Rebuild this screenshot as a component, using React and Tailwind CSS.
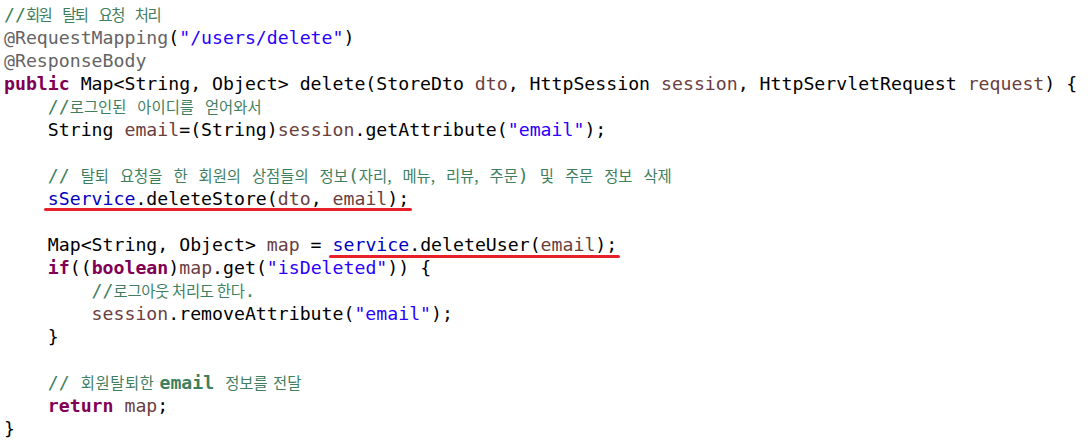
const KW = "text-[#7f0055] font-bold";
const STR = "text-[#2a00ff]";
const CM = "text-[#3f7f5f]";
const ANN = "text-[#646464]";
const LV = "text-[#6a3e3e]";
const FLD = "text-[#0000c0]";

function K({ children, className = "" }) {
  return (
    <span className={`font-['Noto_Sans_CJK_KR','Noto_Sans_CJK_SC',sans-serif] text-[15.4px] font-normal ${className}`}>
      {children}
    </span>
  );
}

function Line({ indent = 0, children }) {
  return (
    <div className="h-[23px] leading-[23px] whitespace-pre">
      {"    ".repeat(indent)}
      {children}
    </div>
  );
}

function Mark({ children, top }) {
  return (
    <span className="relative">
      {children}
      <span className={`absolute left-[-4px] right-[-3px] ${top} h-[3px] rounded-full bg-[#e8202a]`} />
    </span>
  );
}

export default function App() {
  return (
    <div className="min-h-screen w-[1090px] h-[445px] bg-white overflow-hidden">
      <div className="pl-[4px] pt-[3px] text-black font-['DejaVu_Sans_Mono','Liberation_Mono',monospace] text-[18.2px]">
        <Line>
          <span className={CM}>
            //<K className="tracking-[-1.5px]">회원</K> <K className="tracking-[-1.5px]">탈퇴</K> <K className="tracking-[-1.5px]">요청</K> <K className="tracking-[-1.5px]">처리</K>
          </span>
        </Line>
        <Line>
          <span className={ANN}>@RequestMapping</span>(<span className={STR}>"/users/delete"</span>)
        </Line>
        <Line>
          <span className={ANN}>@ResponseBody</span>
        </Line>
        <Line>
          <span className={KW}>public</span> Map&lt;String, Object&gt; delete(StoreDto <span className={LV}>dto</span>, HttpSession{" "}
          <span className={LV}>session</span>, HttpServletRequest <span className={LV}>request</span>) {"{"}
        </Line>
        <Line indent={1}>
          <span className={CM}>
            //<K>로그인된</K> <K>아이디를</K> <K>얻어와서</K>
          </span>
        </Line>
        <Line indent={1}>
          String <span className={LV}>email</span>=(String)<span className={LV}>session</span>.getAttribute(
          <span className={STR}>"email"</span>);
        </Line>
        <Line />
        <Line indent={1}>
          <span className={CM}>
            // <K>탈퇴</K> <K>요청을</K> <K>한</K> <K>회원의</K> <K>상점들의</K> <K>정보</K>(<K>자리,</K> <K>메뉴,</K> <K>리뷰,</K>{" "}
            <K>주문</K>) <K>및</K> <K>주문</K> <K>정보</K> <K>삭제</K>
          </span>
        </Line>
        <Line indent={1}>
          <Mark top="top-[20px]">
            <span className={FLD}>sService</span>.deleteStore(<span className={LV}>dto</span>, <span className={LV}>email</span>);
          </Mark>
        </Line>
        <Line />
        <Line indent={1}>
          Map&lt;String, Object&gt; <span className={LV}>map</span> ={" "}
          <Mark top="top-[21px]">
            <span className={FLD}>service</span>.deleteUser(<span className={LV}>email</span>);
          </Mark>
        </Line>
        <Line indent={1}>
          <span className={KW}>if</span>((<span className={KW}>boolean</span>)<span className={LV}>map</span>.get(
          <span className={STR}>"isDeleted"</span>)) {"{"}
        </Line>
        <Line indent={2}>
          <span className={CM}>
            //<K className="tracking-[-0.3px]">로그아웃 처리도 한다</K>.
          </span>
        </Line>
        <Line indent={2}>
          <span className={LV}>session</span>.removeAttribute(<span className={STR}>"email"</span>);
        </Line>
        <Line indent={1}>{"}"}</Line>
        <Line />
        <Line indent={1}>
          <span className={CM}>
            // <K className="tracking-[0.6px]">회원탈퇴한</K><span className="ml-[5px] font-bold">email</span>{" "}
            <K className="[word-spacing:2px]">정보를 전달</K>
          </span>
        </Line>
        <Line indent={1}>
          <span className={KW}>return</span> <span className={LV}>map</span>;
        </Line>
        <Line>{"}"}</Line>
      </div>
    </div>
  );
}
